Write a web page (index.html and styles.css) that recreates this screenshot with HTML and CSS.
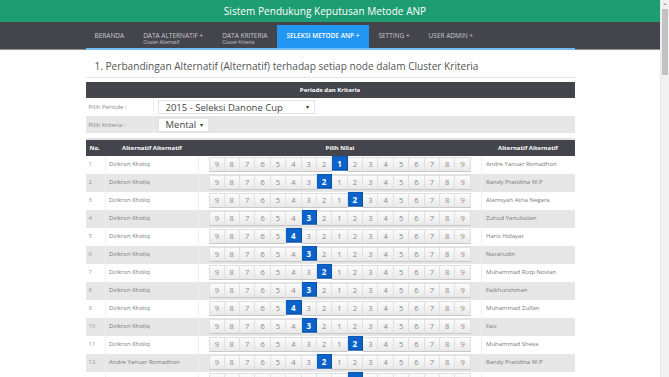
FILE: index.html
```html
<!DOCTYPE html>
<html lang="id">
<head>
  <meta charset="UTF-8">
  <meta name="viewport" content="width=device-width, initial-scale=1.0">
  <title>Sistem Pendukung Keputusan Metode ANP</title>
  <link rel="stylesheet" href="styles.css">
</head>
<body>
  <div class="window">
    <div class="page">
      <header class="topbar">
        <h1>Sistem Pendukung Keputusan Metode ANP</h1>
      </header>
      <nav class="menu">
        <ul class="menu-list">
          <li class="menu-item"><a href="#">BERANDA</a></li>
          <li class="menu-item"><a href="#">DATA ALTERNATIF +</a><small>Cluster Alternatif</small></li>
          <li class="menu-item"><a href="#">DATA KRITERIA</a><small>Cluster Kriteria</small></li>
          <li class="menu-item active"><a href="#">SELEKSI METODE ANP +</a></li>
          <li class="menu-item"><a href="#">SETTING +</a></li>
          <li class="menu-item"><a href="#">USER ADMIN +</a></li>
        </ul>
      </nav>

      <main class="content">
        <h2 class="section-title">1. Perbandingan Alternatif (Alternatif) terhadap setiap node dalam Cluster Kriteria</h2>

        <table class="filter">
          <tr><th colspan="2">Periode dan Kriteria</th></tr>
          <tr>
            <td class="filter-label">Pilih Periode :</td>
            <td><span class="select select-wide">2015 - Seleksi Danone Cup <i class="caret">&#9662;</i></span></td>
          </tr>
          <tr class="shade">
            <td class="filter-label">Pilih Kriteria :</td>
            <td><span class="select">Mental <i class="caret">&#9662;</i></span></td>
          </tr>
        </table>

        <table class="compare">
          <tr>
            <th class="col-no">No.</th>
            <th class="col-name">Alternatif Alternatif</th>
            <th class="col-scale">Pilih Nilai</th>
            <th class="col-name">Alternatif Alternatif</th>
          </tr>
          <tr>
            <td class="no">1</td><td class="name">Dzikron Kholiq</td>
            <td class="scale"><div class="picks"><span>9</span><span>8</span><span>7</span><span>6</span><span>5</span><span>4</span><span>3</span><span>2</span><span class="on">1</span><span>2</span><span>3</span><span>4</span><span>5</span><span>6</span><span>7</span><span>8</span><span>9</span></div></td>
            <td class="name name-right">Andre Yanuar Romadhon</td>
          </tr>
          <tr class="shade">
            <td class="no">2</td><td class="name">Dzikron Kholiq</td>
            <td class="scale"><div class="picks"><span>9</span><span>8</span><span>7</span><span>6</span><span>5</span><span>4</span><span>3</span><span class="on">2</span><span>1</span><span>2</span><span>3</span><span>4</span><span>5</span><span>6</span><span>7</span><span>8</span><span>9</span></div></td>
            <td class="name name-right">Randy Pratidina W.P</td>
          </tr>
          <tr>
            <td class="no">3</td><td class="name">Dzikron Kholiq</td>
            <td class="scale"><div class="picks"><span>9</span><span>8</span><span>7</span><span>6</span><span>5</span><span>4</span><span>3</span><span>2</span><span>1</span><span class="on">2</span><span>3</span><span>4</span><span>5</span><span>6</span><span>7</span><span>8</span><span>9</span></div></td>
            <td class="name name-right">Alamsyah Atria Negara</td>
          </tr>
          <tr class="shade">
            <td class="no">4</td><td class="name">Dzikron Kholiq</td>
            <td class="scale"><div class="picks"><span>9</span><span>8</span><span>7</span><span>6</span><span>5</span><span>4</span><span class="on">3</span><span>2</span><span>1</span><span>2</span><span>3</span><span>4</span><span>5</span><span>6</span><span>7</span><span>8</span><span>9</span></div></td>
            <td class="name name-right">Zuhud Yanulistian</td>
          </tr>
          <tr>
            <td class="no">5</td><td class="name">Dzikron Kholiq</td>
            <td class="scale"><div class="picks"><span>9</span><span>8</span><span>7</span><span>6</span><span>5</span><span class="on">4</span><span>3</span><span>2</span><span>1</span><span>2</span><span>3</span><span>4</span><span>5</span><span>6</span><span>7</span><span>8</span><span>9</span></div></td>
            <td class="name name-right">Haris Hidayat</td>
          </tr>
          <tr class="shade">
            <td class="no">6</td><td class="name">Dzikron Kholiq</td>
            <td class="scale"><div class="picks"><span>9</span><span>8</span><span>7</span><span>6</span><span>5</span><span>4</span><span class="on">3</span><span>2</span><span>1</span><span>2</span><span>3</span><span>4</span><span>5</span><span>6</span><span>7</span><span>8</span><span>9</span></div></td>
            <td class="name name-right">Nazarudin</td>
          </tr>
          <tr>
            <td class="no">7</td><td class="name">Dzikron Kholiq</td>
            <td class="scale"><div class="picks"><span>9</span><span>8</span><span>7</span><span>6</span><span>5</span><span>4</span><span>3</span><span class="on">2</span><span>1</span><span>2</span><span>3</span><span>4</span><span>5</span><span>6</span><span>7</span><span>8</span><span>9</span></div></td>
            <td class="name name-right">Muhammad Rizqi Novian</td>
          </tr>
          <tr class="shade">
            <td class="no">8</td><td class="name">Dzikron Kholiq</td>
            <td class="scale"><div class="picks"><span>9</span><span>8</span><span>7</span><span>6</span><span>5</span><span>4</span><span class="on">3</span><span>2</span><span>1</span><span>2</span><span>3</span><span>4</span><span>5</span><span>6</span><span>7</span><span>8</span><span>9</span></div></td>
            <td class="name name-right">Fatkhurohman</td>
          </tr>
          <tr>
            <td class="no">9</td><td class="name">Dzikron Kholiq</td>
            <td class="scale"><div class="picks"><span>9</span><span>8</span><span>7</span><span>6</span><span>5</span><span class="on">4</span><span>3</span><span>2</span><span>1</span><span>2</span><span>3</span><span>4</span><span>5</span><span>6</span><span>7</span><span>8</span><span>9</span></div></td>
            <td class="name name-right">Muhammad Zulfan</td>
          </tr>
          <tr class="shade">
            <td class="no">10</td><td class="name">Dzikron Kholiq</td>
            <td class="scale"><div class="picks"><span>9</span><span>8</span><span>7</span><span>6</span><span>5</span><span>4</span><span class="on">3</span><span>2</span><span>1</span><span>2</span><span>3</span><span>4</span><span>5</span><span>6</span><span>7</span><span>8</span><span>9</span></div></td>
            <td class="name name-right">Faiz</td>
          </tr>
          <tr>
            <td class="no">11</td><td class="name">Dzikron Kholiq</td>
            <td class="scale"><div class="picks"><span>9</span><span>8</span><span>7</span><span>6</span><span>5</span><span>4</span><span>3</span><span>2</span><span>1</span><span class="on">2</span><span>3</span><span>4</span><span>5</span><span>6</span><span>7</span><span>8</span><span>9</span></div></td>
            <td class="name name-right">Muhammad Sheva</td>
          </tr>
          <tr class="shade">
            <td class="no">12</td><td class="name">Andre Yanuar Romadhon</td>
            <td class="scale"><div class="picks"><span>9</span><span>8</span><span>7</span><span>6</span><span>5</span><span>4</span><span>3</span><span class="on">2</span><span>1</span><span>2</span><span>3</span><span>4</span><span>5</span><span>6</span><span>7</span><span>8</span><span>9</span></div></td>
            <td class="name name-right">Randy Pratidina W.P</td>
          </tr>
          <tr>
            <td class="no">13</td><td class="name">Andre Yanuar Romadhon</td>
            <td class="scale"><div class="picks"><span>9</span><span>8</span><span>7</span><span>6</span><span>5</span><span>4</span><span>3</span><span>2</span><span>1</span><span class="on">2</span><span>3</span><span>4</span><span>5</span><span>6</span><span>7</span><span>8</span><span>9</span></div></td>
            <td class="name name-right">Alamsyah Atria Negara</td>
          </tr>
        </table>
      </main>
    </div>

    <div class="scrollbar">
      <span class="scroll-arrow"></span>
      <span class="scroll-thumb"></span>
    </div>
  </div>
</body>
</html>
```

FILE: styles.css
```css
html {
  overflow: hidden;
}

body {
  margin: 0;
  font-family: "Open Sans", "Liberation Sans", sans-serif;
  background: #fff;
  color: #555;
}

.window {
  display: flex;
  height: 100vh;
}

.page {
  flex: 1;
  min-width: 0;
}

/* top title bar */
.topbar {
  height: 22px;
  background: #1e9c72;
  display: flex;
  align-items: center;
  justify-content: center;
  padding-right: 10px;
}

.topbar h1 {
  margin: 0;
  font-size: 10px;
  font-weight: 400;
  color: #fff;
  letter-spacing: 0.05px;
}

/* menu */
.menu {
  height: 28px;
  background: #43444c;
  box-shadow: inset 0 -1px 0 #8c8d92;
}

.menu-list {
  width: 489px;
  height: 28px;
  margin: 0 auto;
  padding: 0;
  list-style: none;
  display: flex;
  box-sizing: border-box;
  border-bottom: 2px solid #74bdf4;
}

.menu-item {
  margin-top: 3px;
  padding: 7px 10px 0 9px;
  display: flex;
  flex-direction: column;
}

.menu-item a {
  font-size: 6.5px;
  line-height: 8px;
  color: #c9cacd;
  text-decoration: none;
  white-space: nowrap;
}

.menu-item small {
  font-size: 4.6px;
  line-height: 5px;
  color: #c9cacd;
  white-space: nowrap;
}

.menu-item.active {
  background: #2196f3;
}

.menu-item.active a {
  color: #fff;
  font-weight: 600;
}

/* content */
.content {
  width: 489px;
  margin: 0 auto;
}

.section-title {
  margin: 0;
  padding: 9px 9px 4px;
  font-size: 10.1px;
  line-height: 14px;
  font-weight: 400;
  color: #555;
  border-bottom: 1px dotted #cfcfcf;
}

.filter {
  width: 100%;
  margin-top: 4px;
  border-collapse: collapse;
}

.filter th {
  height: 16px;
  padding: 0;
  background: #43444c;
  color: #fff;
  font-size: 6px;
  font-weight: 700;
}

.filter td {
  height: 18px;
  padding: 0 0 0 4px;
  font-size: 6px;
  color: #888;
}

.filter .shade td {
  height: 17px;
}

.filter .filter-label {
  width: 64px;
  padding-left: 3px;
  border-right: 1px solid #eee;
}

.shade td {
  background: #e6e6e6;
}

.select {
  display: inline-flex;
  align-items: center;
  justify-content: space-between;
  width: 51px;
  height: 14px;
  padding: 0 5px 0 7px;
  box-sizing: border-box;
  background: #fff;
  border: 1px solid #e2e2e2;
  font-size: 9.5px;
  color: #444;
}

.select-wide {
  width: 157px;
}

.caret {
  font-style: normal;
  font-size: 6px;
  color: #333;
}

/* comparison table */
.compare {
  width: 100%;
  margin-top: 5px;
  border-collapse: collapse;
  border-top: 2px solid #e3e3e3;
  table-layout: fixed;
}

.compare th {
  height: 16px;
  padding: 0;
  background: #43444c;
  color: #fff;
  font-size: 6px;
  font-weight: 700;
  text-align: center;
}

.compare th.col-no {
  width: 20px;
  text-align: left;
  padding-left: 4px;
  box-sizing: border-box;
}

.compare th.col-name {
  width: 93px;
}

.compare td {
  padding: 1px 0 2px;
  line-height: 15px;
  font-size: 6px;
  color: #7a7a7a;
  border-left: 1px solid #eee;
  white-space: nowrap;
  overflow: hidden;
}

.compare td.no {
  padding-left: 3px;
  color: #999;
  border-left: 0;
}

.compare td.name {
  padding-left: 3px;
}

.compare td.name-right {
  padding-left: 4px;
}

.picks {
  display: flex;
  justify-content: center;
  height: 15px;
}

.picks span {
  width: 15.4px;
  height: 15px;
  box-sizing: border-box;
  display: flex;
  align-items: center;
  justify-content: center;
  font-size: 7.5px;
  color: #8a8a8a;
  background: linear-gradient(#fbfbfb, #e9e9e9);
  border: 1px solid #e0e0e0;
  border-bottom-color: #c8c8c8;
  border-left-width: 0;
}

.picks span:first-child {
  border-left-width: 1px;
}

.picks span.on {
  background: #0b63c9;
  border-color: #0a4f9c;
  color: #fff;
  font-weight: 700;
  font-size: 8px;
  transform: translateY(-1.5px);
}

/* fake browser scrollbar */
.scrollbar {
  width: 8px;
  background: #f1f1f1;
  border-left: 1px solid #e8e8e8;
  display: flex;
  flex-direction: column;
  align-items: center;
}

.scroll-arrow {
  margin-top: 3px;
  width: 0;
  height: 0;
  border-left: 2px solid transparent;
  border-right: 2px solid transparent;
  border-bottom: 2px solid #a3a3a3;
}

.scroll-thumb {
  margin-top: 4px;
  width: 6px;
  height: 66px;
  background: #c1c1c1;
}
```
